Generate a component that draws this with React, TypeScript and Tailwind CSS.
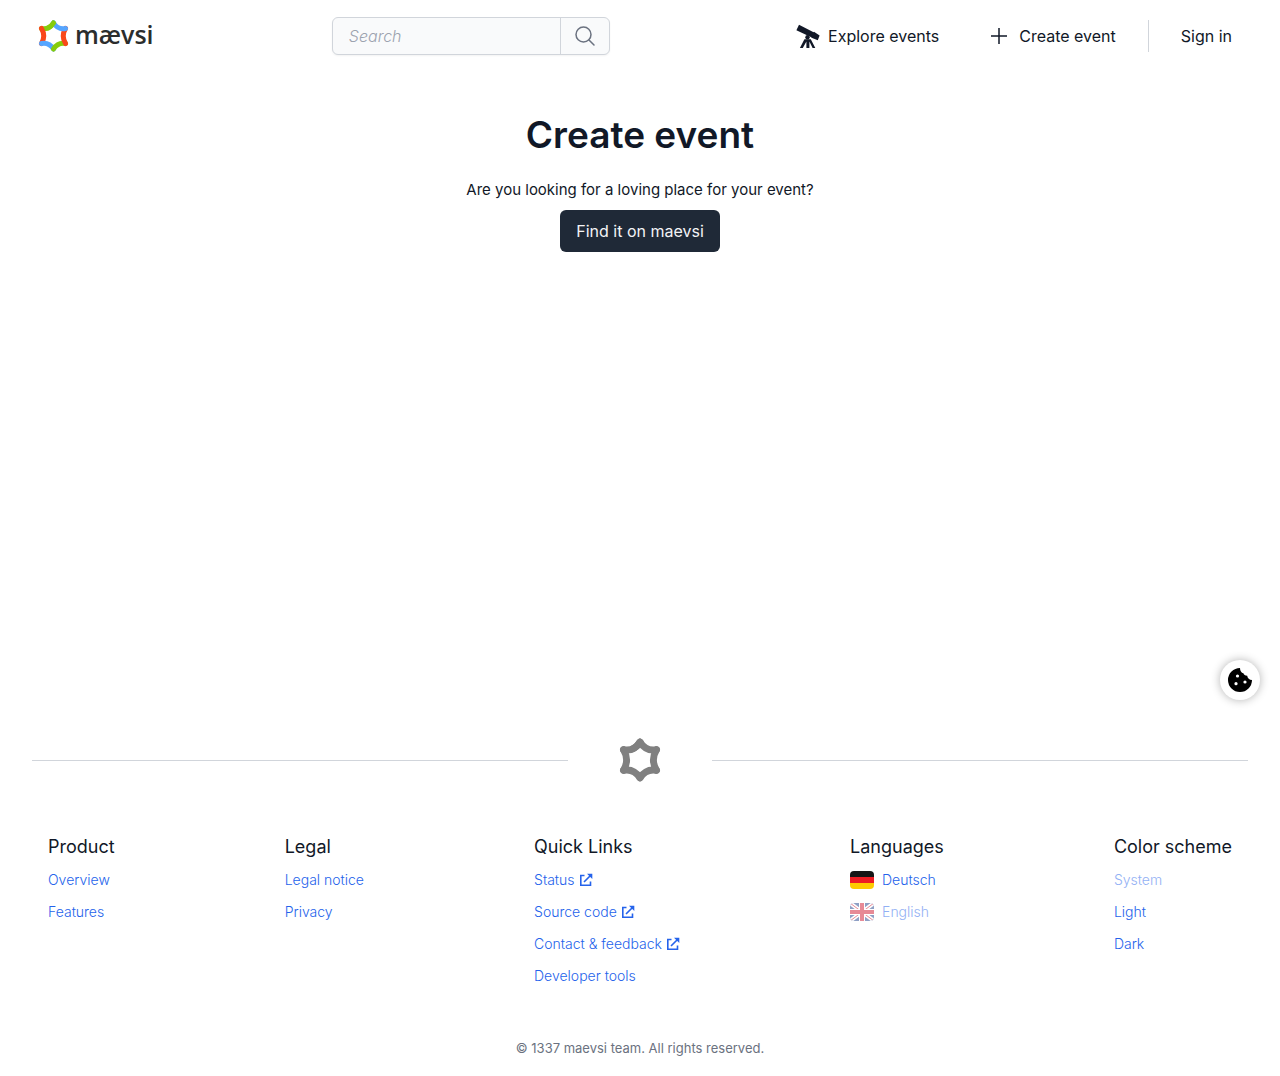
import React from "react";

const STAR = [
  { d: "M30 6Q21 20 6 17", c: "#86cc0c" },
  { d: "M6 17Q15 32 6 47", c: "#f9481a" },
  { d: "M6 47Q21 44 30 58", c: "#55a5ff" },
  { d: "M30 58Q39 44 54 47", c: "#86cc0c" },
  { d: "M54 47Q45 32 54 17", c: "#f9481a" },
  { d: "M54 17Q39 20 30 6", c: "#55a5ff" },
  { d: "M30 6Q25.500 13 19.500 15.750", c: "#86cc0c" },
];

function Star({ mono, className }: { mono?: boolean; className: string }) {
  return (
    <svg viewBox="0 0 60 64" className={className} fill="none" strokeWidth="10" strokeLinecap="round" aria-hidden="true">
      {STAR.map((s) => (
        <path key={s.d} d={s.d} stroke={mono ? "#808080" : s.c} />
      ))}
    </svg>
  );
}

function Telescope() {
  return (
    <svg viewBox="0 0 24 24" className="size-6" fill="currentColor" aria-hidden="true">
      <path d="M3 .8 17.600 8.200 18 7.800 23.600 11.600 21.800 16.200 15.500 13.800 15.300 13.200.4 6.200z" />
      <circle cx="11.500" cy="13.200" r="2.200" />
      <path d="M8.400 15.200h6.400L19.300 24h-2.700l-3.200-6.500V24h-3v-6.500L6.800 24H3.900z" />
    </svg>
  );
}

function External() {
  return (
    <svg viewBox="0 0 14 14" className="ml-1 size-3.5" fill="none" stroke="currentColor" strokeWidth="1.600" aria-hidden="true">
      <path d="M5.500 2.500H1.800v9.700h9.700V8.500M5 9l6.500-6.500" />
      <path d="M8 .7h5.300V6z" fill="currentColor" stroke="none" />
    </svg>
  );
}

function German() {
  return (
    <svg viewBox="0 0 24 18" className="mr-2 h-[18px] w-6 rounded-sm" aria-hidden="true">
      <path fill="#151515" d="M0 0h24v6H0z" />
      <path fill="#ed1c24" d="M0 6h24v6H0z" />
      <path fill="#fecb00" d="M0 12h24v6H0z" />
    </svg>
  );
}

function British() {
  return (
    <svg viewBox="0 0 24 18" className="mr-2 h-[18px] w-6 rounded-sm" aria-hidden="true">
      <path fill="#22438c" d="M0 0h24v18H0z" />
      <path stroke="#fff" strokeWidth="4" d="m0 0 24 18M24 0 0 18" />
      <path stroke="#d0182f" strokeWidth="1" d="m0 0 24 18M24 0 0 18" />
      <path stroke="#fff" strokeWidth="6" d="M12 0v18M0 9h24" />
      <path stroke="#d0182f" strokeWidth="4" d="M12 0v18M0 9h24" />
    </svg>
  );
}

type Item = { label: string; external?: boolean; icon?: React.ReactNode; disabled?: boolean; button?: boolean };

const COLUMNS: { title: string; items: Item[] }[] = [
  { title: "Product", items: [{ label: "Overview" }, { label: "Features" }] },
  { title: "Legal", items: [{ label: "Legal notice" }, { label: "Privacy" }] },
  {
    title: "Quick Links",
    items: [
      { label: "Status", external: true },
      { label: "Source code", external: true },
      { label: "Contact & feedback", external: true },
      { label: "Developer tools" },
    ],
  },
  {
    title: "Languages",
    items: [
      { label: "Deutsch", icon: <German /> },
      { label: "English", icon: <British />, disabled: true },
    ],
  },
  {
    title: "Color scheme",
    items: [
      { label: "System", disabled: true, button: true },
      { label: "Light", button: true },
      { label: "Dark", button: true },
    ],
  },
];

function FooterItem({ item }: { item: Item }) {
  const content = (
    <>
      {item.icon}
      {item.label}
      {item.external && <External />}
    </>
  );
  if (item.button) {
    return (
      <button type="button" disabled={item.disabled} className="flex items-center text-[#2563eb] disabled:opacity-50">
        {content}
      </button>
    );
  }
  return (
    <a href="#" className={item.disabled ? "flex items-center text-[#2563eb] opacity-50" : "flex items-center text-[#2563eb]"}>
      {content}
    </a>
  );
}

export default function App() {
  return (
    <div className="flex min-h-screen flex-col bg-white font-['Inter',sans-serif] text-base text-[#111827]">
      <header className="flex h-18 items-center justify-between pr-12 pl-[38px]">
        <a href="#" className="flex items-center gap-1.5" aria-label="maevsi home">
          <Star className="h-8 w-[31px]" />
          <span className="pb-1 font-['Open_Sans',sans-serif] text-[25px] leading-7 font-semibold text-[#2b2d2d]">mævsi</span>
        </a>
        <form className="flex h-[38px] w-[278px] rounded-md border border-[#d1d5db] bg-[#f9fafb] shadow-xs" onSubmit={(e) => e.preventDefault()}>
          <input
            type="search"
            aria-label="Search"
            placeholder="Search"
            className="min-w-0 flex-1 px-4 font-light italic outline-none placeholder:text-[#9ca3af]"
          />
          <button type="submit" aria-label="Submit search" className="flex w-[49px] items-center justify-center border-l border-[#d1d5db] text-[#6b7280]">
            <svg viewBox="0 0 24 24" className="size-6" fill="none" stroke="currentColor" strokeWidth="1.500" strokeLinecap="round" aria-hidden="true">
              <circle cx="10.500" cy="10.500" r="7.500" />
              <path d="m16 16 5 5" />
            </svg>
          </button>
        </form>
        <nav className="flex items-center pl-2">
          <a href="#" className="flex items-center gap-2">
            <Telescope />
            Explore events
          </a>
          <a href="#" className="ml-12 flex items-center gap-2">
            <svg viewBox="0 0 24 24" className="size-6" fill="none" stroke="currentColor" strokeWidth="1.500" aria-hidden="true">
              <path d="M12 4v16M4 12h16" />
            </svg>
            Create event
          </a>
          <a href="#" className="ml-8 flex h-8 items-center border-l border-[#d1d5db] pl-8">
            Sign in
          </a>
        </nav>
      </header>

      <main className="flex flex-1 flex-col items-center pt-10">
        <h1 className="text-[37px] leading-[46px] font-semibold">Create event</h1>
        <p className="mt-5 text-[15px] leading-6">Are you looking for a loving place for your event?</p>
        <a href="#" className="mt-2 flex h-[42px] items-center rounded-md bg-[#1f2937] px-4 text-[#f3f4f6]">
          Find it on maevsi
        </a>
      </main>

      <footer>
        <div className="flex items-center px-8">
          <div className="h-px flex-1 bg-[#d1d5db]" />
          <div className="flex w-36 justify-center">
            <Star mono className="h-11 w-[42px]" />
          </div>
          <div className="h-px flex-1 bg-[#d1d5db]" />
        </div>
        <div className="mt-[51px] flex justify-between px-12">
          {COLUMNS.map((col) => (
            <section key={col.title}>
              <h2 className="text-lg leading-7">{col.title}</h2>
              <ul className="mt-[9px] space-y-3 text-sm leading-5 font-light">
                {col.items.map((item) => (
                  <li key={item.label}>
                    <FooterItem item={item} />
                  </li>
                ))}
              </ul>
            </section>
          ))}
        </div>
        <p className="mt-[52px] pb-[18px] text-center text-[13px] leading-5 text-[#6b7280]">© 1337 maevsi team. All rights reserved.</p>
      </footer>

      <button
        type="button"
        aria-label="Cookie settings"
        className="fixed top-[660px] right-5 flex size-10 items-center justify-center rounded-full bg-white text-black shadow-[0_0_10px_rgba(0,0,0,0.3)]"
      >
        <svg viewBox="0 0 24 24" className="size-6" fill="currentColor" aria-hidden="true">
          <path d="M12 0A12 12 0 1 0 24 12c-2.600 0-4.500-1.500-4.800-4.200C17 7.700 15.900 7 15.400 5.300 13.400 4.800 12 3 12 0z" />
          <g fill="#fff">
            <circle cx="9.500" cy="8" r="1.600" />
            <circle cx="8" cy="15.700" r="1.600" />
            <circle cx="17" cy="14" r="1.600" />
          </g>
        </svg>
      </button>
    </div>
  );
}
